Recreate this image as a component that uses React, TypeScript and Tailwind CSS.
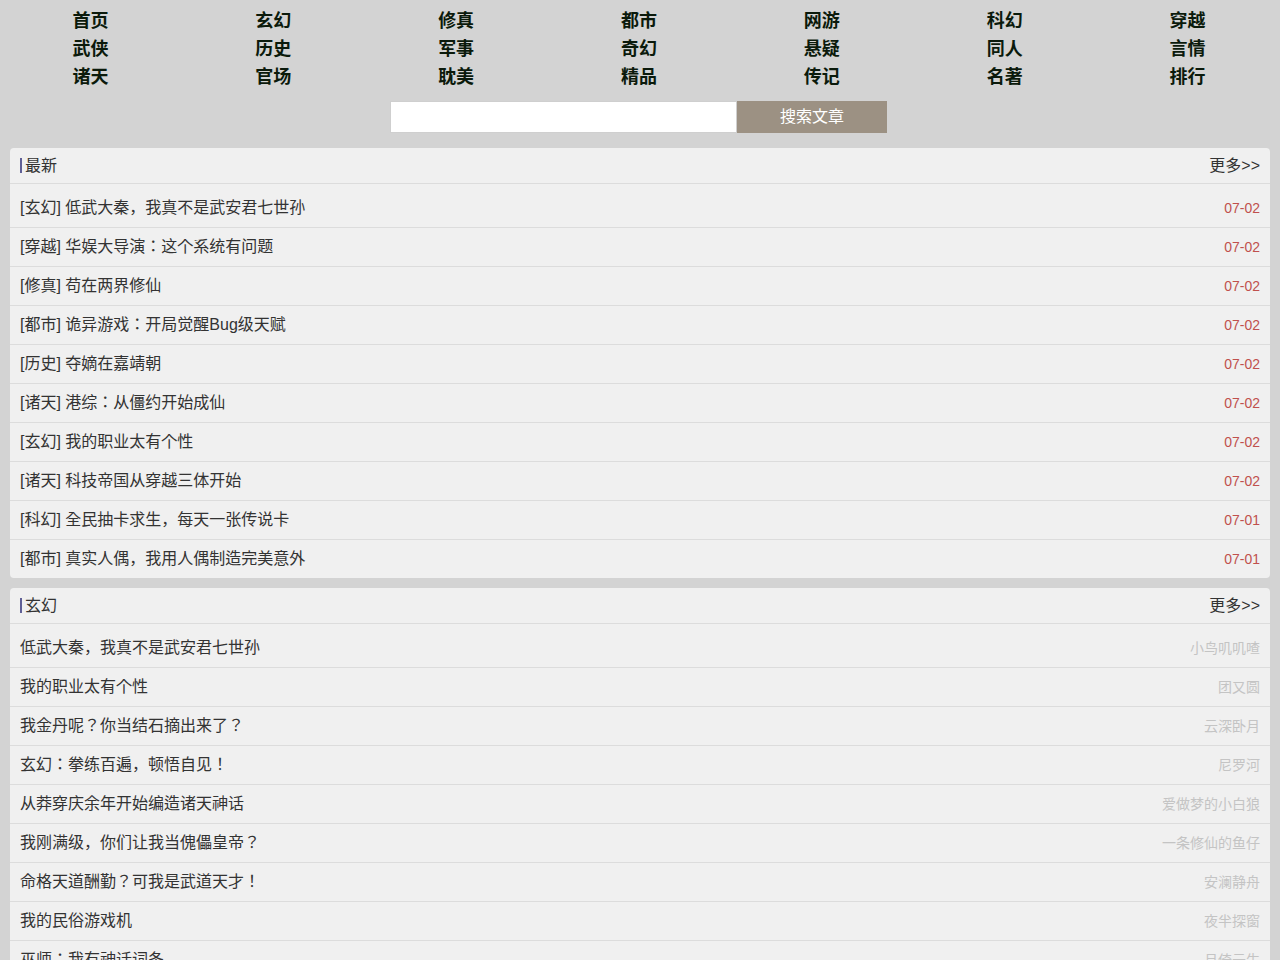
import React from "react";

const nav = [
  "首页","玄幻","修真","都市","网游","科幻","穿越",
  "武侠","历史","军事","奇幻","悬疑","同人","言情",
  "诸天","官场","耽美","精品","传记","名著","排行",
];

const latest = [
  ["玄幻","低武大秦，我真不是武安君七世孙","07-02"],
  ["穿越","华娱大导演：这个系统有问题","07-02"],
  ["修真","苟在两界修仙","07-02"],
  ["都市","诡异游戏：开局觉醒Bug级天赋","07-02"],
  ["历史","夺嫡在嘉靖朝","07-02"],
  ["诸天","港综：从僵约开始成仙","07-02"],
  ["玄幻","我的职业太有个性","07-02"],
  ["诸天","科技帝国从穿越三体开始","07-02"],
  ["科幻","全民抽卡求生，每天一张传说卡","07-01"],
  ["都市","真实人偶，我用人偶制造完美意外","07-01"],
];

const xuanhuan = [
  ["低武大秦，我真不是武安君七世孙","小鸟叽叽喳"],
  ["我的职业太有个性","团又圆"],
  ["我金丹呢？你当结石摘出来了？","云深卧月"],
  ["玄幻：拳练百遍，顿悟自见！","尼罗河"],
  ["从莽穿庆余年开始编造诸天神话","爱做梦的小白狼"],
  ["我刚满级，你们让我当傀儡皇帝？","一条修仙的鱼仔"],
  ["命格天道酬勤？可我是武道天才！","安澜静舟"],
  ["我的民俗游戏机","夜半探窗"],
  ["巫师：我有神话词条","月倚云生"],
];

function Header({ title }: { title: string }) {
  return (
    <div className="flex items-center justify-between h-[36px] px-[10px] border-b border-[#dcdcdc]">
      <div className="flex items-center text-[16px] text-[#333]">
        <span className="inline-block w-[2px] h-[15px] bg-[#5f5f96] mr-[3px]"></span>
        {title}
      </div>
      <div className="text-[16px] text-[#333]">更多&gt;&gt;</div>
    </div>
  );
}

const body = { fontFamily: '"Liberation Sans", "Noto Sans CJK KR", sans-serif' };

export default function App() {
  return (
    <div
      className="min-h-[960px] bg-[#d3d3d3] pb-4"
      style={body}
    >
      <div
        className="grid grid-cols-7 pt-[7px] pb-[2px]"
        style={{ fontFamily: '"Liberation Sans", "Noto Sans CJK SC", sans-serif' }}
      >
        {nav.map((n) => (
          <div key={n} className="h-[28px] flex items-center justify-center text-[18px] font-bold text-[#0b1a0b]">
            <span className="-ml-[2px]">{n}</span>
          </div>
        ))}
      </div>
      <div className="flex justify-center pt-[8px] pb-[15px] pr-[3px]">
        <input className="w-[347px] h-[32px] bg-white border border-[#cfcfcf] outline-none" />
        <button className="w-[150px] h-[32px] bg-[#9c9183] text-white text-[16px]">搜索文章</button>
      </div>
      <div className="mx-[10px] bg-[#f0f0f0] rounded-[4px]">
        <Header title="最新" />
        <div className="pt-[5px]">
          {latest.map(([c, t, d], i) => (
            <div
              key={i}
              className={`flex items-center justify-between px-[10px] ${i < latest.length - 1 ? "h-[39px] border-b border-[#dcdcdc]" : "h-[38px]"}`}
            >
              <span className="text-[16px] text-[#333]">[{c}] {t}</span>
              <span className="text-[14px] text-[#c0504d]">{d}</span>
            </div>
          ))}
        </div>
      </div>
      <div className="mx-[10px] mt-[10px] bg-[#f0f0f0] rounded-[4px]">
        <Header title="玄幻" />
        <div className="pt-[5px]">
          {xuanhuan.map(([t, a], i) => (
            <div
              key={i}
              className="flex items-center justify-between h-[39px] px-[10px] border-b border-[#dcdcdc]"
            >
              <span className="text-[16px] text-[#333]">{t}</span>
              <span className="text-[14px] text-[#c4c4c4]">{a}</span>
            </div>
          ))}
        </div>
      </div>
    </div>
  );
}
